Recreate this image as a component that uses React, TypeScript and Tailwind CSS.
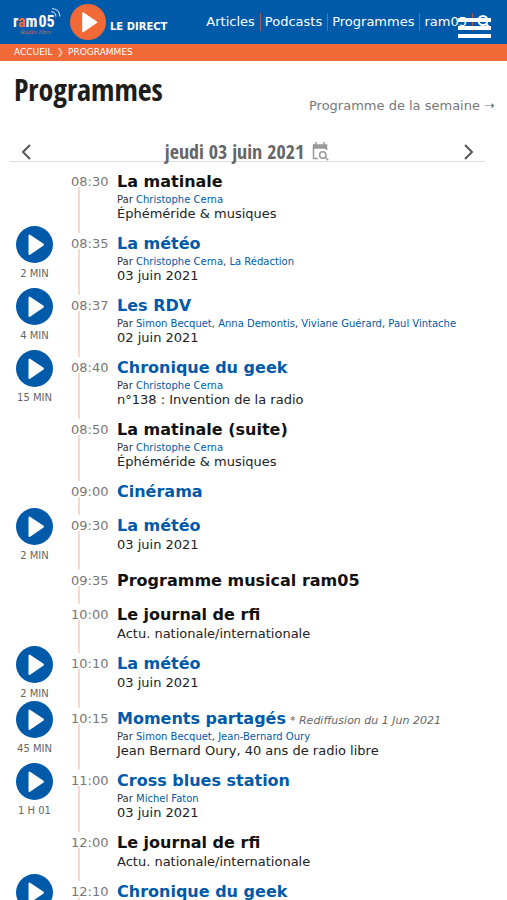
type Person = string;

interface Show {
  time: string;
  title: string;
  linked?: boolean;
  note?: string;
  people?: Person[];
  text?: string;
  duration?: string;
}

const shows: Show[] = [
  { time: '08:30', title: 'La matinale', people: ['Christophe Cerna'], text: 'Éphéméride & musiques' },
  { time: '08:35', title: 'La météo', linked: true, people: ['Christophe Cerna', 'La Rédaction'], text: '03 juin 2021', duration: '2 MIN' },
  { time: '08:37', title: 'Les RDV', linked: true, people: ['Simon Becquet', 'Anna Demontis', 'Viviane Guérard', 'Paul Vintache'], text: '02 juin 2021', duration: '4 MIN' },
  { time: '08:40', title: 'Chronique du geek', linked: true, people: ['Christophe Cerna'], text: 'n°138 : Invention de la radio', duration: '15 MIN' },
  { time: '08:50', title: 'La matinale (suite)', people: ['Christophe Cerna'], text: 'Éphéméride & musiques' },
  { time: '09:00', title: 'Cinérama', linked: true },
  { time: '09:30', title: 'La météo', linked: true, text: '03 juin 2021', duration: '2 MIN' },
  { time: '09:35', title: 'Programme musical ram05' },
  { time: '10:00', title: 'Le journal de rfi', text: 'Actu. nationale/internationale' },
  { time: '10:10', title: 'La météo', linked: true, text: '03 juin 2021', duration: '2 MIN' },
  { time: '10:15', title: 'Moments partagés', linked: true, note: '* Rediffusion du 1 Jun 2021', people: ['Simon Becquet', 'Jean-Bernard Oury'], text: 'Jean Bernard Oury, 40 ans de radio libre', duration: '45 MIN' },
  { time: '11:00', title: 'Cross blues station', linked: true, people: ['Michel Faton'], text: '03 juin 2021', duration: '1 H 01' },
  { time: '12:00', title: 'Le journal de rfi', text: 'Actu. nationale/internationale' },
  { time: '12:10', title: 'Chronique du geek', linked: true, duration: '15 MIN' },
];

const navItems = ['Articles', 'Podcasts', 'Programmes', 'ram05'];

function PlayIcon({ className }: { className: string }) {
  return (
    <svg viewBox="0 0 37 37" className={className} aria-hidden="true">
      <circle cx="18.5" cy="18.5" r="18.5" fill="currentColor" />
      <path d="M13.5 9.5v18.5L27 18.7z" fill="#fff" stroke="#fff" strokeWidth="2" strokeLinejoin="round" />
    </svg>
  );
}

function Logo() {
  return (
    <svg viewBox="0 0 50 32" className="h-8 w-[50px]" role="img" aria-label="ram05">
      <text x="1" y="21" fontFamily="'Roboto Condensed', Roboto, sans-serif" fontSize="16" fontWeight="700" fill="#fff">
        r<tspan fill="#f06937">a</tspan>m<tspan dx="1">05</tspan>
      </text>
      <text x="8" y="28" fontFamily="'Liberation Serif', serif" fontStyle="italic" fontSize="7" fill="#c4685a">Radio libre</text>
      <g fill="none" stroke="#bcd3ec" strokeWidth="1.2">
        <path d="M39 5.500q4.500.5 5 5" />
        <path d="M40 2.500q7.500.5 8 8" />
      </g>
    </svg>
  );
}

function CalendarSearch() {
  return (
    <svg viewBox="0 0 18 19" className="h-[19px] w-[18px]" fill="none" stroke="#999" strokeWidth="1.5" aria-hidden="true">
      <path d="M1.500 3h13v3h-13z" fill="#999" />
      <path d="M4 0v3M12 0v3M1.500 6v10.500H6M14.500 6v2" />
      <circle cx="10.800" cy="13" r="3.200" />
      <path d="m13.200 15.300 3 3" />
    </svg>
  );
}

function ShowRow({ show }: { show: Show }) {
  return (
    <li className="relative grid min-h-[34px] grid-cols-[41px_1fr] gap-x-4">
      <div className="flex flex-col items-center">
        {show.duration && (
          <>
            <button type="button" aria-label={`Écouter ${show.title}`} className="h-[37px] w-[37px] text-[#005aaa]">
              <PlayIcon className="h-[37px] w-[37px]" />
            </button>
            <span className="whitespace-nowrap pt-[3px] text-[10px] leading-[15px] text-[#666]">{show.duration}</span>
          </>
        )}
      </div>
      <div className="flex">
        <div className="w-[46px] shrink-0 pt-[7px]">
          <time className="block text-[13px] leading-[22px] text-[#777]">{show.time}</time>
          <span className="absolute bottom-[-7px] left-[64px] top-[23px] w-[2px] bg-[#fbd8cc]" />
        </div>
        <div className="pb-1 pt-[7px]">
          <h2 className="flex h-[22px] items-baseline gap-1 whitespace-nowrap text-base font-bold leading-[22px] text-[#111]">
            {show.linked ? <a href="#" className="text-[#005aaa]">{show.title}</a> : show.title}
            {show.note && <em className="text-[11px] font-normal text-[#666]">{show.note}</em>}
          </h2>
          {show.people && (
            <p className="text-[10px] leading-[13px] text-[#333]">
              Par{' '}
              {show.people.map((person, i) => (
                <span key={person}>
                  {i > 0 && ', '}
                  <a href="#" className="text-[#005aaa]">{person}</a>
                </span>
              ))}
            </p>
          )}
          {show.text && <p className="text-[13px] leading-4 text-[#222]">{show.text}</p>}
        </div>
      </div>
    </li>
  );
}

export default function App() {
  return (
    <div className="min-h-screen bg-white font-['DejaVu_Sans',sans-serif]">
      <header className="relative flex h-11 items-center justify-between bg-[#005aaa] pl-3 pr-4 text-white">
        <div className="flex items-center">
          <a href="#"><Logo /></a>
          <button type="button" className="ml-2 flex items-center gap-1">
            <PlayIcon className="h-9 w-9 text-[#f06937]" />
            <span className="pt-2 text-[10px] font-bold">LE DIRECT</span>
          </button>
        </div>
        <nav className="flex items-center text-[13px] leading-[18px]">
          {navItems.map((item) => (
            <a key={item} href="#" className="border-r border-[#a45b5b] pl-1 pr-[5px]">{item}</a>
          ))}
          <a href="#" aria-label="Rechercher" className="pl-1">
            <svg viewBox="0 0 14 14" className="h-[14px] w-[14px]" fill="none" stroke="#fff" strokeWidth="2" aria-hidden="true">
              <circle cx="6" cy="5.500" r="4.500" />
              <path d="m9 9 4 4" />
            </svg>
          </a>
        </nav>
        <button type="button" aria-label="Menu" className="absolute right-4 top-[18px] flex w-[33px] flex-col gap-1">
          <span className="h-1 bg-white" />
          <span className="h-1 bg-white" />
          <span className="h-1 bg-white" />
        </button>
      </header>
      <nav className="flex h-[17px] items-center gap-1 bg-[#f06937] pl-[14px] text-[9px] text-white">
        <a href="#">ACCUEIL</a>
        <span className="text-[#fbc0a6]">❯</span>
        <a href="#">PROGRAMMES</a>
      </nav>
      <main className="pl-[14px] pr-3">
        <div className="flex h-[74px] items-start justify-between">
          <h1 className="pt-2 font-['Noto_Sans_ExtraCondensed','Open_Sans_Condensed','Roboto_Condensed',sans-serif] text-[30px] font-bold leading-[42px] text-[#1d1d1b]">Programmes</h1>
          <a href="#" className="pt-9 text-[13px] leading-[18px] text-[#777]">Programme de la semaine ➝</a>
        </div>
        <div className="-ml-1 mr-[10px] flex h-[27px] items-center justify-between border-b border-[#ddd] px-[11px] pt-[7px]">
          <button type="button" aria-label="Jour précédent">
            <svg viewBox="0 0 10 16" className="h-4 w-[10px]" fill="none" stroke="#555" strokeWidth="2"><path d="M9 1 2 8l7 7" /></svg>
          </button>
          <div className="flex items-center gap-2">
            <span className="font-['Noto_Sans_ExtraCondensed','Open_Sans_Condensed','Roboto_Condensed',sans-serif] text-xl font-bold leading-5 text-[#666]">jeudi 03 juin 2021</span>
            <button type="button" aria-label="Choisir une date"><CalendarSearch /></button>
          </div>
          <button type="button" aria-label="Jour suivant">
            <svg viewBox="0 0 10 16" className="h-4 w-[10px]" fill="none" stroke="#555" strokeWidth="2"><path d="m1 1 7 7-7 7" /></svg>
          </button>
        </div>
        <ul className="pt-[2px]">
          {shows.map((show) => (
            <ShowRow key={show.time} show={show} />
          ))}
        </ul>
      </main>
    </div>
  );
}
